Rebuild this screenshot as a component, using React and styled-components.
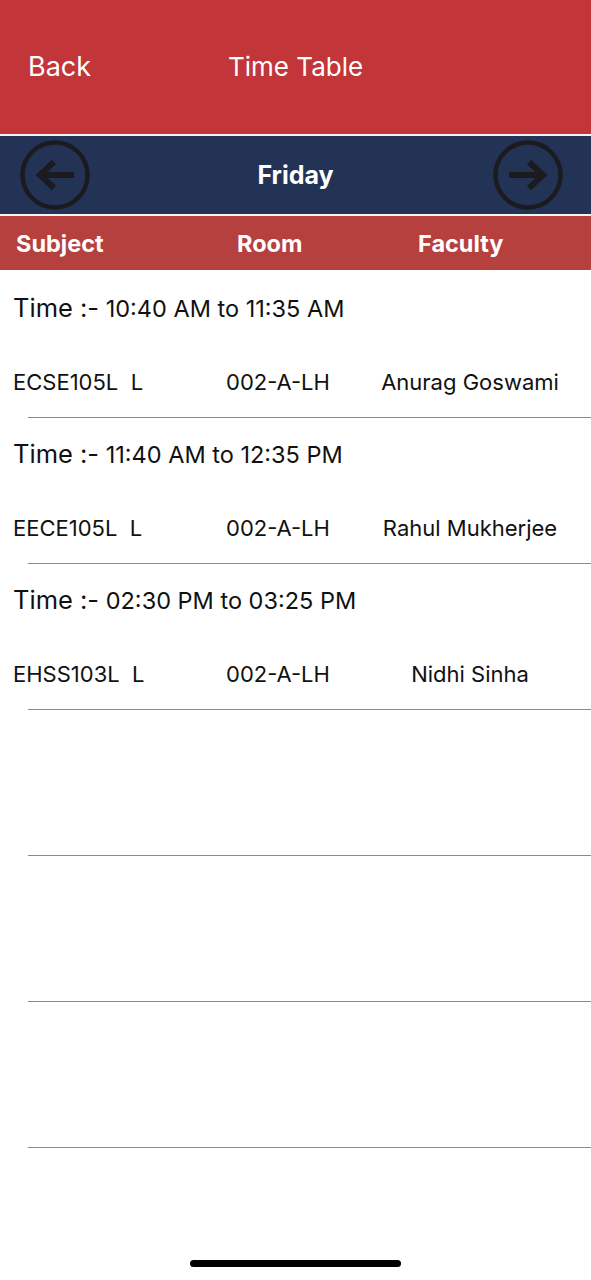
import styled, { createGlobalStyle } from 'styled-components';

const GlobalStyle = createGlobalStyle`
  html, body {
    margin: 0;
    padding: 0;
    background: #fff;
  }
  body {
    font-family: Inter, 'Open Sans', 'Liberation Sans', sans-serif;
    color: #111;
  }
`;

const slots = [
  {
    time: '10:40 AM to 11:35 AM',
    subject: 'ECSE105L  L',
    room: '002-A-LH',
    faculty: 'Anurag Goswami',
  },
  {
    time: '11:40 AM to 12:35 PM',
    subject: 'EECE105L  L',
    room: '002-A-LH',
    faculty: 'Rahul Mukherjee',
  },
  {
    time: '02:30 PM to 03:25 PM',
    subject: 'EHSS103L  L',
    room: '002-A-LH',
    faculty: 'Nidhi Sinha',
  },
  null,
  null,
  null,
];

const ArrowIcon = ({ flip }) => (
  <svg
    width="72"
    height="72"
    viewBox="0 0 72 72"
    style={flip ? { transform: 'scaleX(-1)' } : undefined}
  >
    <circle cx="36" cy="36" r="32.5" fill="none" stroke="#1b1b1f" strokeWidth="4.5" />
    <path d="M17 36 H50" stroke="#1b1b1f" strokeWidth="6" fill="none" />
    <path
      d="M37 23 L51 36 L37 49"
      stroke="#1b1b1f"
      strokeWidth="6"
      fill="none"
      strokeLinejoin="miter"
    />
  </svg>
);

export default function App() {
  return (
    <Page>
      <GlobalStyle />
      <TopBar>
        <BackLink>Back</BackLink>
        <Title>Time Table</Title>
      </TopBar>
      <DayBar>
        <NavButton>
          <ArrowIcon flip />
        </NavButton>
        <DayName>Friday</DayName>
        <NavButton>
          <ArrowIcon />
        </NavButton>
      </DayBar>
      <ColumnHeader>
        <span>Subject</span>
        <span>Room</span>
        <span>Faculty</span>
      </ColumnHeader>
      <List>
        {slots.map((slot, i) => (
          <Row key={i}>
            <RowBody>
              {slot && (
                <>
                  <TimeLine>
                    <TimeLabel>Time :-</TimeLabel> {slot.time}
                  </TimeLine>
                  <DataRow>
                    <Subject>{slot.subject}</Subject>
                    <Room>{slot.room}</Room>
                    <Faculty>{slot.faculty}</Faculty>
                  </DataRow>
                </>
              )}
            </RowBody>
            <Divider />
          </Row>
        ))}
      </List>
      <HomeBar />
    </Page>
  );
}

const Page = styled.div`
  width: 591px;
  min-height: 1280px;
  display: flex;
  flex-direction: column;
  background: #fff;
`;

const TopBar = styled.div`
  height: 136px;
  background: #c23538;
  display: flex;
  align-items: center;
  padding: 0 0 2px 28px;
  box-sizing: border-box;
  color: #fff;
  border-bottom: 2px solid #f4f4f4;
`;

const BackLink = styled.div`
  font-size: 27px;
  width: 200px;
`;

const Title = styled.div`
  font-size: 26px;
`;

const DayBar = styled.div`
  height: 80px;
  box-sizing: border-box;
  background: #233356;
  border-bottom: 2px solid #f4f4f4;
  display: flex;
  align-items: center;
  justify-content: space-between;
  padding: 0 27px 0 19px;
`;

const NavButton = styled.div`
  width: 72px;
  height: 72px;
  display: flex;
  align-items: center;
  justify-content: center;
  cursor: pointer;
`;

const DayName = styled.div`
  color: #fff;
  font-weight: 700;
  font-size: 25px;
  margin-left: 8px;
`;

const ColumnHeader = styled.div`
  height: 54px;
  background: #b5403e;
  color: #fff;
  font-weight: 700;
  font-size: 23.5px;
  display: grid;
  grid-template-columns: 221px 181px 1fr;
  align-items: center;
  padding-left: 16px;
`;

const List = styled.div`
  display: flex;
  flex-direction: column;
  padding-top: 2px;
`;

const Row = styled.div`
  height: 146px;
  display: flex;
  flex-direction: column;
`;

const RowBody = styled.div`
  flex: 1;
  padding-left: 13px;
`;

const TimeLine = styled.div`
  margin-top: 21px;
  height: 30px;
  line-height: 30px;
  font-size: 23.5px;
`;

const TimeLabel = styled.span`
  font-size: 25.5px;
`;

const DataRow = styled.div`
  margin-top: 47px;
  height: 24px;
  line-height: 24px;
  font-size: 22px;
  display: grid;
  grid-template-columns: 213px 127px 1fr;
  white-space: pre;
`;

const Subject = styled.div``;

const Room = styled.div``;

const Faculty = styled.div`
  text-align: center;
  padding-right: 4px;
`;

const Divider = styled.div`
  height: 1px;
  margin-left: 28px;
  background: #e0646a;
`;

const HomeBar = styled.div`
  width: 211px;
  height: 7px;
  border-radius: 4px;
  background: #000;
  margin: 112px auto 0;
`;
